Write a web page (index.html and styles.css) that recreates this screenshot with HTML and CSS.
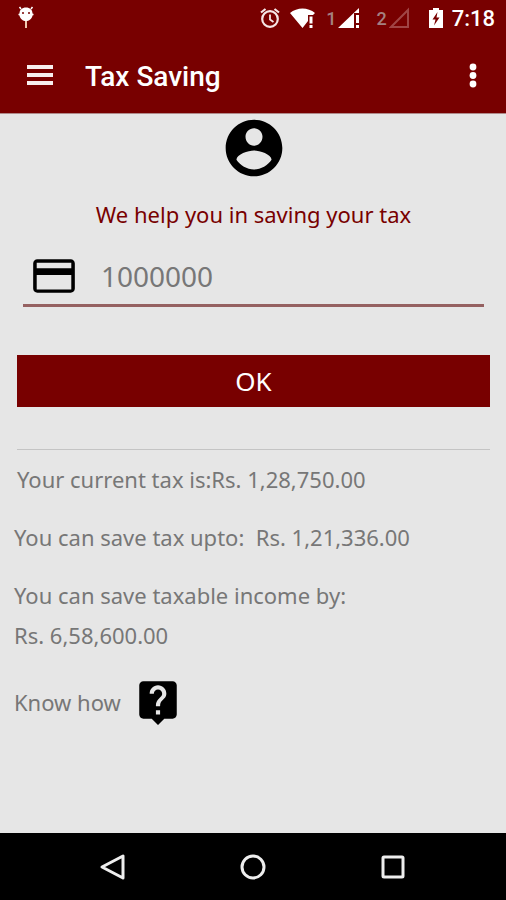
FILE: index.html
```html
<!DOCTYPE html>
<html lang="en">
<head>
<meta charset="utf-8">
<meta name="viewport" content="width=device-width, initial-scale=1">
<title>Tax Saving</title>
<link rel="stylesheet" href="styles.css">
</head>
<body>
<div class="status">
  <svg class="bug" width="18" height="24" viewBox="0 0 18 24" aria-hidden="true">
    <path d="M4 3 2.500 1M14 3 15.500 1" stroke="#fff" stroke-width="1.500"/>
    <path d="M9 1.500C13 1.500 15.500 4 15.500 7.500 17 7.500 17 9.500 15.500 9.500 15 13 12 15 9 15S3 13 2.500 9.500C1 9.500 1 7.500 2.500 7.500 2.500 4 5 1.500 9 1.500z" fill="#fff"/>
    <path d="M9 15v7" stroke="#f0c8b0" stroke-width="2"/>
    <circle cx="6" cy="7" r="1" fill="#780000"/><circle cx="12" cy="7" r="1" fill="#780000"/>
  </svg>
  <div class="signals">
    <svg width="22" height="24" viewBox="0 0 22 24" fill="none" stroke="#f6e6e6" aria-hidden="true">
      <circle cx="11" cy="13" r="7.800" stroke-width="2.200"/>
      <path d="M2 6.500 6.500 3M20 6.500 15.500 3" stroke-width="2.200"/>
      <path d="M11 8.500V13.500L14.500 16" stroke-width="1.800"/>
    </svg>
    <svg class="wifi" width="26" height="24" viewBox="0 0 26 24" fill="#fff" aria-hidden="true">
      <path d="M0 7C7 1 18 1 25 7L23 9H18V15L12.500 22z"/>
      <path d="M19.500 10.500h3v7h-3zM19.500 19h3v3h-3z"/>
    </svg>
    <span class="sim">1</span>
    <svg class="cell" width="22" height="24" viewBox="0 0 22 24" fill="#fff" aria-hidden="true">
      <path d="M0 22 21 2V7H16V22z"/>
      <path d="M18 9h3v8h-3zM18 19h3v3h-3z"/>
    </svg>
    <span class="sim two">2</span>
    <svg class="cell" width="22" height="24" viewBox="0 0 22 24" fill="none" stroke="#a04545" stroke-width="2" aria-hidden="true">
      <path d="M2 21 19 4V21z"/>
    </svg>
    <svg class="battery" width="16" height="24" viewBox="0 0 16 24" aria-hidden="true">
      <path d="M5 2h6v2h4v18H1V4h4z" fill="#fff"/>
      <path d="M9.500 6 4.500 13.500H7.500L6 19.500 11.500 11.500H8.500z" fill="#780000"/>
    </svg>
    <time class="clock">7:18</time>
  </div>
</div>
<header class="bar">
  <button class="icon-btn" type="button" aria-label="Menu">
    <svg width="28" height="24" viewBox="0 0 28 24" fill="#f8eeee" aria-hidden="true"><path d="M1 2h26v4H1zM1 10h26v4H1zM1 18h26v4H1z"/></svg>
  </button>
  <h1>Tax Saving</h1>
  <button class="icon-btn more" type="button" aria-label="More options">
    <svg width="8" height="26" viewBox="0 0 8 26" fill="#fff" aria-hidden="true"><circle cx="4" cy="5" r="3.400"/><circle cx="4" cy="13.500" r="3.400"/><circle cx="4" cy="22" r="3.400"/></svg>
  </button>
</header>
<main>
  <svg class="avatar" width="68" height="68" viewBox="0 0 24 24" aria-hidden="true">
    <path d="M12 2C6.480 2 2 6.480 2 12s4.480 10 10 10 10-4.480 10-10S17.520 2 12 2zm0 3c1.660 0 3 1.340 3 3s-1.340 3.200-3 3.200-3-1.540-3-3.200 1.340-3 3-3zm0 14.600c-2.500 0-4.910-1.480-6.200-3.420.030-1.990 4.200-3.280 6.200-3.280 1.990 0 6.170 1.290 6.200 3.280-1.290 1.940-3.700 3.420-6.200 3.420z"/>
  </svg>
  <p class="lead">We help you in saving your tax</p>
  <form>
    <label class="field">
      <svg width="50" height="50" viewBox="0 0 24 24" role="img" aria-label="Income">
        <path d="M20 4H4c-1.110 0-1.990.890-1.990 2L2 18c0 1.110.890 2 2 2h16c1.110 0 2-.890 2-2V6c0-1.110-.890-2-2-2zm0 14.500H3.700V11.500H20.300v7zM20.300 8.300H3.700V5.600h16.600z"/>
      </svg>
      <input type="text" inputmode="numeric" value="1000000">
    </label>
    <button class="ok" type="button">OK</button>
  </form>
  <section class="results">
    <p class="current">Your current tax is:Rs. 1,28,750.00</p>
    <p>You can save tax upto:&nbsp; Rs. 1,21,336.00</p>
    <p>You can save taxable income by:<br>Rs. 6,58,600.00</p>
    <a class="how" href="#how">Know how
      <svg width="50" height="50" viewBox="0 0 24 24" aria-hidden="true">
        <path d="M19 2H5c-1.110 0-2 .900-2 2v14c0 1.100.890 2 2 2h4l3 3 3-3h4c1.100 0 2-.900 2-2V4c0-1.100-.900-2-2-2zm-6 16h-2v-2h2v2zm2.070-7.750l-.900.920C13.450 11.900 13 12.500 13 14h-2v-.500c0-1.100.450-2.100 1.170-2.830l1.240-1.260c.370-.360.590-.860.590-1.410 0-1.100-.900-2-2-2s-2 .900-2 2H8c0-2.210 1.790-4 4-4s4 1.790 4 4c0 .880-.360 1.680-.930 2.250z"/>
      </svg>
    </a>
  </section>
</main>
<nav>
  <button type="button" aria-label="Back"><svg width="28" height="28" viewBox="0 0 28 28"><path d="M3 14 24 3V25z"/></svg></button>
  <button type="button" aria-label="Home"><svg width="28" height="28" viewBox="0 0 28 28"><circle cx="14" cy="14" r="11"/></svg></button>
  <button type="button" aria-label="Recent apps"><svg width="28" height="28" viewBox="0 0 28 28"><rect x="4" y="4" width="20" height="20" rx="1"/></svg></button>
</nav>
</body>
</html>
```
FILE: styles.css
```css
* { box-sizing: border-box; }
body {
  margin: 0;
  min-height: 100vh;
  display: flex;
  flex-direction: column;
  background: #e6e6e6;
  color: #777;
  font-family: "Noto Sans", "Open Sans", sans-serif;
  font-size: 22px;
  line-height: 40px;
}
h1, p { margin: 0; }
button { border: 0; padding: 0; background: none; font: inherit; color: inherit; }
svg { display: block; flex: none; }

.status {
  display: flex;
  align-items: center;
  justify-content: space-between;
  height: 36px;
  padding: 0 11px 0 17px;
  background: #780000;
  color: #fff;
  font-family: Roboto, sans-serif;
  line-height: 36px;
}
.signals { display: flex; align-items: center; }
.wifi { margin-left: 9px; }
.sim { margin-left: 10px; padding-top: 2px; font-size: 18px; font-weight: 500; color: #a58080; }
.two { margin-left: 16px; }
.cell { margin-left: 2px; }
.battery { margin-left: 17px; }
.clock { margin-left: 8px; padding-top: 2px; font-size: 22px; font-weight: 500; }

.bar {
  display: flex;
  align-items: center;
  height: 78px;
  padding: 0 29px 0 26px;
  background: #780000;
  border-bottom: 1px solid #b08a8a;
  color: #fff;
}
.bar h1 {
  flex: 1;
  margin-left: 31px;
  padding-top: 4px;
  font: 500 28px/36px Roboto, sans-serif;
}

main { flex: 1; display: flex; flex-direction: column; padding: 0 16px 0 17px; }
.avatar { align-self: center; }
.lead { line-height: 32px; margin-top: 16px; text-align: center; color: #780000; }
form { border-bottom: 1px solid #c4c4c4; padding-bottom: 42px; }
.field {
  display: flex;
  align-items: center;
  gap: 22px;
  height: 60px;
  margin: 17px 6px 48px;
  padding-left: 6px;
  border-bottom: 3px solid #956161;
}
.field input {
  flex: 1;
  min-width: 0;
  border: 0;
  padding: 0;
  outline: 0;
  background: none;
  font: inherit;
  font-size: 28px;
  color: #777;
}
.ok { display: block; width: 100%; height: 52px; background: #780000; color: #fff; font-size: 26px; }
.results { display: flex; flex-direction: column; gap: 18px; margin: 9px 0 0 -3px; }
.current { padding-left: 3px; }
.how { display: flex; align-items: center; align-self: flex-start; gap: 12px; margin-top: 4px; color: inherit; text-decoration: none; }
.how svg { fill: #000; }

nav { display: flex; justify-content: center; align-items: center; gap: 112px; height: 67px; background: #000; }
nav svg { fill: none; stroke: #eee; stroke-width: 3; stroke-linejoin: round; }
```
